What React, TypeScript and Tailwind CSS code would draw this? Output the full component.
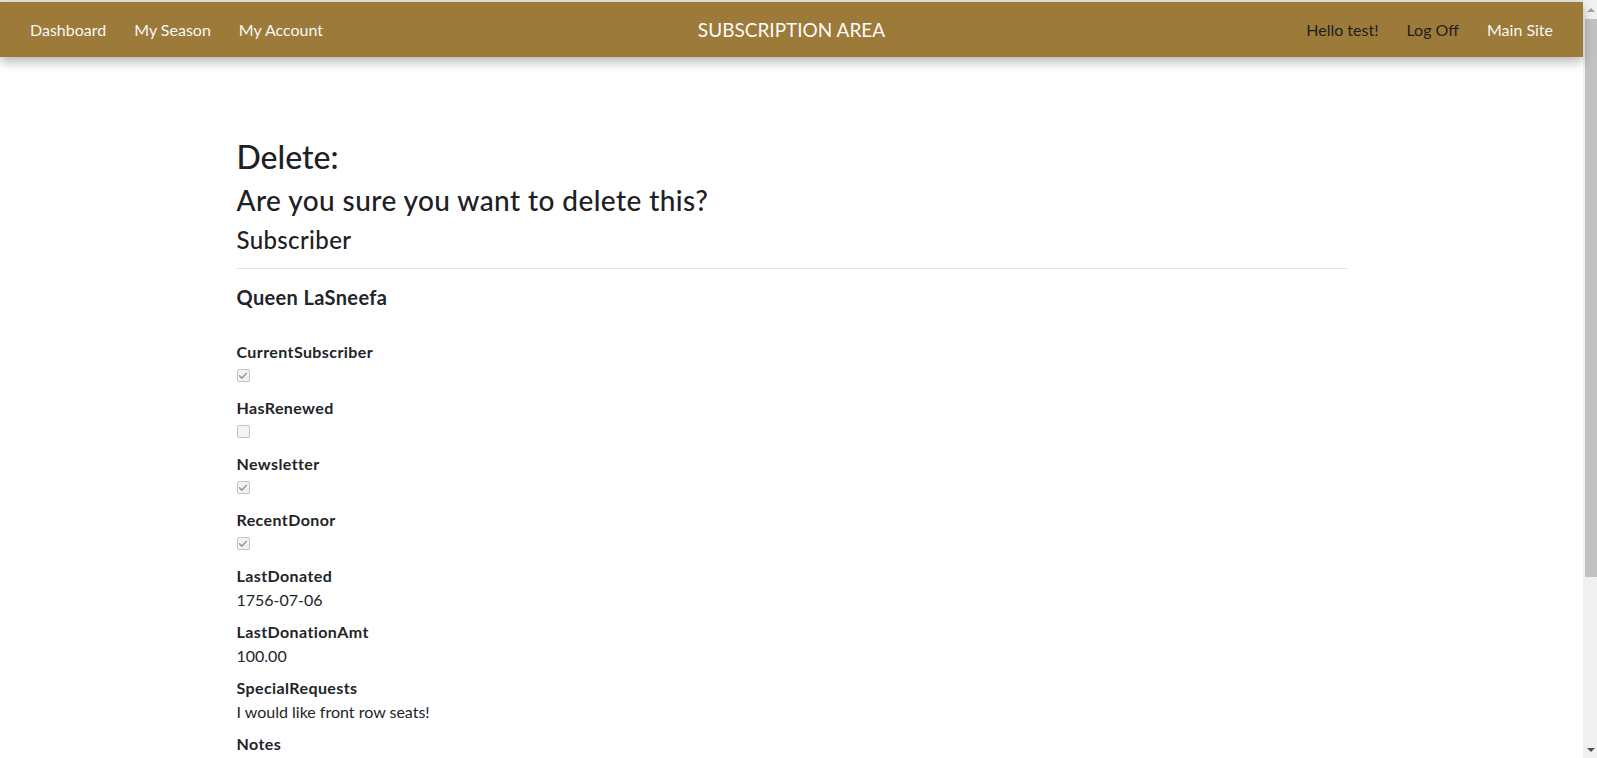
import { Check } from "lucide-react";

const font = { fontFamily: '"Lato", "Open Sans", sans-serif' };

type Field =
    | { label: string; kind: "check"; checked: boolean }
    | { label: string; kind: "text"; value: string };

const fields: Field[] = [
    { label: "CurrentSubscriber", kind: "check", checked: true },
    { label: "HasRenewed", kind: "check", checked: false },
    { label: "Newsletter", kind: "check", checked: true },
    { label: "RecentDonor", kind: "check", checked: true },
    { label: "LastDonated", kind: "text", value: "1756-07-06" },
    { label: "LastDonationAmt", kind: "text", value: "100.00" },
    { label: "SpecialRequests", kind: "text", value: "I would like front row seats!" },
    { label: "Notes", kind: "text", value: "" },
];

function DisabledCheckbox({ checked }: { checked: boolean }) {
    return (
        <div className="flex h-[13px] w-[13px] items-center justify-center rounded-[2px] border border-[#c4c4c4] bg-[#f3f3f3]">
            {checked ? <Check size={10} strokeWidth={4} className="text-[#9a9a9a]" aria-hidden="true" /> : null}
        </div>
    );
}

function Scrollbar() {
    return (
        <div className="flex w-[14px] shrink-0 flex-col bg-[#f0f0f0]">
            <div className="flex h-[19px] shrink-0 items-center justify-center pl-[2px]">
                <div className="h-0 w-0 border-x-[4px] border-b-[4px] border-x-transparent border-b-[#a3a3a3]" />
            </div>
            <div className="ml-[2px] h-[558px] shrink-0 bg-[#c1c1c1]" />
            <div className="flex-1" />
            <div className="flex h-[17px] shrink-0 items-center justify-center pl-[2px]">
                <div className="h-0 w-0 border-x-[4px] border-t-[4px] border-x-transparent border-t-[#505050]" />
            </div>
        </div>
    );
}

export default function App() {
    return (
        <div className="flex h-[758px] w-full overflow-hidden bg-white text-[#212529]" style={font}>
            <div className="flex min-w-0 flex-1 flex-col">
                <div className="h-[2px] shrink-0 bg-[#e3e3e3]" />
                <nav className="relative z-10 grid h-[55px] shrink-0 grid-cols-[1fr_auto_1fr] items-center bg-[#9c7a39] px-[16px] text-[16px] leading-6 shadow-[0_5px_10px_rgba(0,0,0,0.28)]">
                    <div className="flex items-center">
                        <a className="px-[14px] text-[#f7f7f7]">Dashboard</a>
                        <a className="px-[14px] text-[#f7f7f7]">My Season</a>
                        <a className="px-[14px] text-[#f7f7f7]">My Account</a>
                    </div>
                    <div className="text-[19px] text-[#fafafa]">SUBSCRIPTION AREA</div>
                    <div className="flex items-center justify-end">
                        <span className="px-[14px] text-[#1f1f1f]">Hello test!</span>
                        <a className="px-[14px] text-[#1f1f1f]">Log Off</a>
                        <a className="px-[14px] text-[#f7f7f7]">Main Site</a>
                    </div>
                </nav>

                <main className="mx-auto w-full max-w-[1140px] shrink-0 px-[15px] pt-[81px]">
                    <h2 className="mb-[8px] text-[32px] font-medium leading-[1.2] text-[#1d2024]">Delete:</h2>
                    <h3 className="mb-[8px] text-[28px] font-medium leading-[1.2] tracking-[0.015em] text-[#1d2024]">
                        Are you sure you want to delete this?
                    </h3>
                    <div>
                        <h4 className="text-[24px] font-medium leading-[1.2] tracking-[0.015em] text-[#1d2024]">Subscriber</h4>
                        <hr className="mt-[13px] border-t border-[#e5e5e5]" />
                        <h5 className="mt-[16px] text-[20px] font-bold leading-6 tracking-[0.018em]">Queen LaSneefa</h5>
                        <dl className="mt-[31px]">
                            {fields.map((field) => (
                                <div key={field.label}>
                                    <dt className="text-[16px] font-bold leading-6 tracking-[0.025em]">{field.label}</dt>
                                    <dd className="mb-[8px] flex h-6 items-center text-[16px] leading-6">
                                        {field.kind === "check" ? (
                                            <DisabledCheckbox checked={field.checked} />
                                        ) : (
                                            field.value
                                        )}
                                    </dd>
                                </div>
                            ))}
                        </dl>
                    </div>
                </main>
            </div>
            <Scrollbar />
        </div>
    );
}
